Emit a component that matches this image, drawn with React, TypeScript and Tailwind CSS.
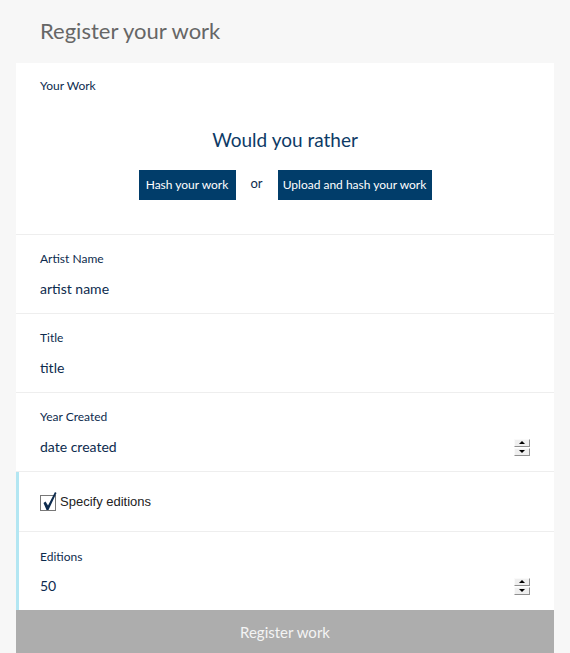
import React from 'react';

const font = { fontFamily: 'Lato, "Open Sans", sans-serif' };

const Spinner: React.FC = () => (
  <div className="flex flex-col w-[16px] gap-[1px]">
    <div className="h-[8px] flex items-center justify-center bg-[#efefef] border-b border-r border-[#8f8f8f] border-t border-l border-t-[#fafafa] border-l-[#fafafa]">
      <div className="w-0 h-0 border-l-[3px] border-r-[3px] border-b-[3px] border-l-transparent border-r-transparent border-b-black" />
    </div>
    <div className="h-[8px] flex items-center justify-center bg-[#efefef] border-b border-r border-[#8f8f8f] border-t border-l border-t-[#fafafa] border-l-[#fafafa]">
      <div className="w-0 h-0 border-l-[3px] border-r-[3px] border-t-[3px] border-l-transparent border-r-transparent border-t-black" />
    </div>
  </div>
);

interface FieldProps {
  label: string;
  value: string;
  spinner?: boolean;
}

const Field: React.FC<FieldProps> = ({ label, value, spinner }) => (
  <div className="h-[79px] border-b border-[#eeeeee] px-6 pt-[17px]">
    <div className="text-[12px] leading-[14px] text-[#0d2b4e]">{label}</div>
    <div className="mt-[14px] flex items-center justify-between">
      <span className="text-[14px] leading-[18px] text-[#0d2b4e]">{value}</span>
      {spinner && <Spinner />}
    </div>
  </div>
);

export default function App() {
  return (
    <div className="w-[570px] h-[653px] bg-[#f7f7f7] overflow-hidden" style={font}>
      <h1 className="h-[63px] pl-[40px] pt-[17px] text-[22px] leading-[28px] text-[#666666]">
        Register your work
      </h1>
      <div className="mx-4 bg-white">
        <div className="h-[172px] border-b border-[#eeeeee] px-6 pt-[16px]">
          <div className="text-[12px] leading-[14px] text-[#0d2b4e]">Your Work</div>
          <div className="mt-[35px] text-center text-[19px] leading-[24px] text-[#0d3a66]">
            Would you rather
          </div>
          <div className="mt-[18px] flex items-center justify-center">
            <button className="h-[30px] w-[97px] bg-[#013d6a] text-[12px] text-white">
              Hash your work
            </button>
            <span className="w-[42px] text-center text-[13px] text-[#0d2b4e] -mt-[3px]">or</span>
            <button className="h-[30px] w-[154px] bg-[#013d6a] text-[12px] text-white">
              Upload and hash your work
            </button>
          </div>
        </div>
        <Field label="Artist Name" value="artist name" />
        <Field label="Title" value="title" />
        <Field label="Year Created" value="date created" spinner />
        <div className="border-l-[3px] border-[#b3e6f2]">
          <div className="h-[60px] border-b border-[#eeeeee] pl-[21px] flex items-center">
            <span className="relative w-[16px] h-[16px] border border-[#777] bg-white mr-[4px] mt-[2px]">
              <svg viewBox="0 0 16 20" className="absolute -top-[5px] left-[0px] w-[16px] h-[20px]">
                <path d="M2.5 12 L4.5 10.5 L7 14.5 L14 1 L15.5 2 L7.5 19 L5.5 19 Z" fill="#0d2b4e" />
              </svg>
            </span>
            <span
              className="text-[13px] text-[#222]"
              style={{ fontFamily: '"Liberation Sans", Arial, sans-serif' }}
            >
              Specify editions
            </span>
          </div>
          <div className="h-[78px] pl-[21px] pt-[18px] pr-6">
            <div className="text-[12px] leading-[14px] text-[#0d2b4e]">Editions</div>
            <div className="mt-[13px] flex items-center justify-between">
              <span className="text-[14px] leading-[18px] text-[#0d2b4e]">50</span>
              <Spinner />
            </div>
          </div>
        </div>
        <button className="w-full h-[44px] bg-[#adadad] text-[15px] text-[#f4f4f4]">
          Register work
        </button>
      </div>
    </div>
  );
}
